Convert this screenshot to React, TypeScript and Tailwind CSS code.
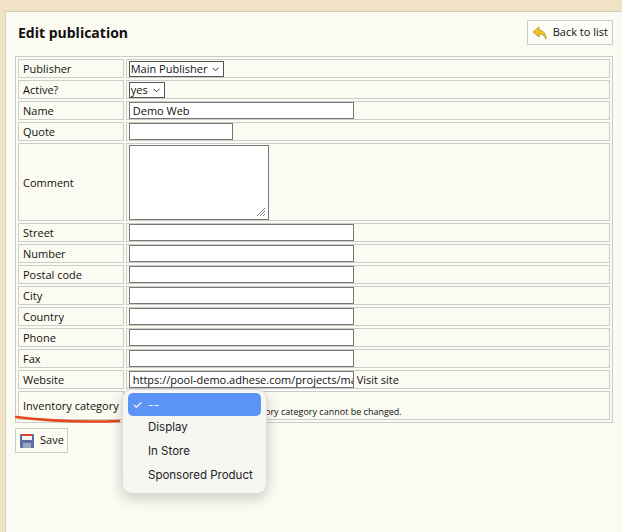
import React from "react";

function Input({ w, value }: { w: number; value?: string }) {
  return (
    <div className="h-[17px] shrink-0 border border-[#777] bg-white px-[3px] text-[11px] leading-[15px] overflow-hidden whitespace-nowrap" style={{ width: w }}>
      {value}
    </div>
  );
}
function Select({ label }: { label: string }) {
  return (
    <div className="inline-flex h-[16px] items-center gap-[5px] border border-[#555] bg-white pl-[1px] pr-[4px] text-[11px] leading-[14px]">
      {label}
      <svg width="7" height="5" viewBox="0 0 7 5"><path d="M0.5 0.8 L3.5 3.8 L6.5 0.8" fill="none" stroke="#333" strokeWidth="1" /></svg>
    </div>
  );
}

export default function App() {
  const data: [string, React.ReactNode, number?][] = [
    ["Publisher", <Select label="Main Publisher" />],
    ["Active?", <Select label="yes" />],
    ["Name", <Input w={225} value="Demo Web" />],
    ["Quote", <Input w={104} />],
    ["Comment", <div className="relative h-[75px] w-[140px] border border-[#777] bg-white"><svg className="absolute right-[2px] bottom-[2px]" width="10" height="10"><path d="M9 1L1 9M9 4L4 9M9 7L7 9" stroke="#888" /></svg></div>, 78],
    ["Street", <Input w={225} />],
    ["Number", <Input w={225} />],
    ["Postal code", <Input w={225} />],
    ["City", <Input w={225} />],
    ["Country", <Input w={225} />],
    ["Phone", <Input w={225} />],
    ["Fax", <Input w={225} />],
    ["Website", <div className="flex items-center gap-[3px] whitespace-nowrap"><Input w={225} value="https://pool-demo.adhese.com/projects/main" /><span className="text-[11px]">Visit site</span></div>],
    ["Inventory category", <div className="pl-[110px] pt-[12px] text-[9px] leading-none">Inventory category cannot be changed.</div>, 29],
  ];
  return (
    <div className="relative h-[532px] w-[622px] overflow-hidden bg-[#f1e2c5] pt-[11px] pl-[5px] text-[#111]" style={{ fontFamily: '"Open Sans", sans-serif' }}>
      <div className="h-full border-l border-t border-[#cfcfc4] bg-[#fbfbf2] pl-[9px] pr-[9px]">
        <div className="flex items-center justify-between pt-[8px]">
          <h1 className="pl-[3px] text-[14px] font-bold">Edit publication</h1>
          <button className="flex h-[25px] items-center gap-[5px] border border-[#ccc] bg-[#fdfdf8] px-[4px] text-[11px]">
            <svg width="16" height="16" viewBox="0 0 16 16"><path d="M7 2 L1 7 L7 12 V9 C11 9 13 11 14 14 C14 9 11 5 7 5 Z" fill="#f2c531" stroke="#b58a10" strokeWidth="0.8" /></svg>
            Back to list
          </button>
        </div>
        <table className="mt-[11px] w-[598px] border border-[#ccc] border-separate border-spacing-[2px] text-[11px]">
          <tbody>
            {data.map(([l, v, h]) => (
              <tr key={l} style={{ height: h ?? 19 }}>
                <td className="w-[101px] border border-[#ccc] px-[4px] py-0 align-middle whitespace-nowrap leading-[17px]">{l}</td>
                <td className="border border-[#ccc] px-[2px] py-0 align-middle leading-[17px]">{v}</td>
              </tr>
            ))}
          </tbody>
        </table>
        <button className="mt-[5px] flex h-[25px] items-center gap-[5px] border border-[#ccc] px-[3px] text-[11px]">
          <svg width="16" height="16" viewBox="0 0 16 16"><rect x="1" y="1" width="14" height="14" rx="1" fill="#5a6fa0" /><rect x="3" y="1" width="10" height="6" fill="#f4f4f4" /><rect x="3" y="1" width="10" height="2" fill="#d9413a" /><rect x="4" y="10" width="8" height="5" fill="#9aa6c0" /></svg>
          Save
        </button>
      </div>
      <svg className="absolute left-[15px] top-[414px]" width="106" height="10"><path d="M1 3 Q50 9 104 7" fill="none" stroke="#e5461c" strokeWidth="2.5" strokeLinecap="round" /></svg>
      <div className="absolute left-[122px] top-[389px] w-[145px] rounded-[10px] border border-[#ddd] bg-[#f6f6f3] px-[5px] pt-[3px] pb-[5px] shadow-[0_4px_14px_rgba(0,0,0,0.2)]" style={{ fontFamily: "Inter, sans-serif" }}>
        <div className="flex h-[23px] items-center rounded-[5px] bg-[#5b93f7] pl-[4px] text-[12px] text-white">
          <span className="w-[16px]">✓</span>--
        </div>
        {["Display", "In Store", "Sponsored Product"].map((t) => (
          <div key={t} className="flex h-[24px] items-center pl-[20px] text-[11.5px] text-[#222]">{t}</div>
        ))}
      </div>
    </div>
  );
}
